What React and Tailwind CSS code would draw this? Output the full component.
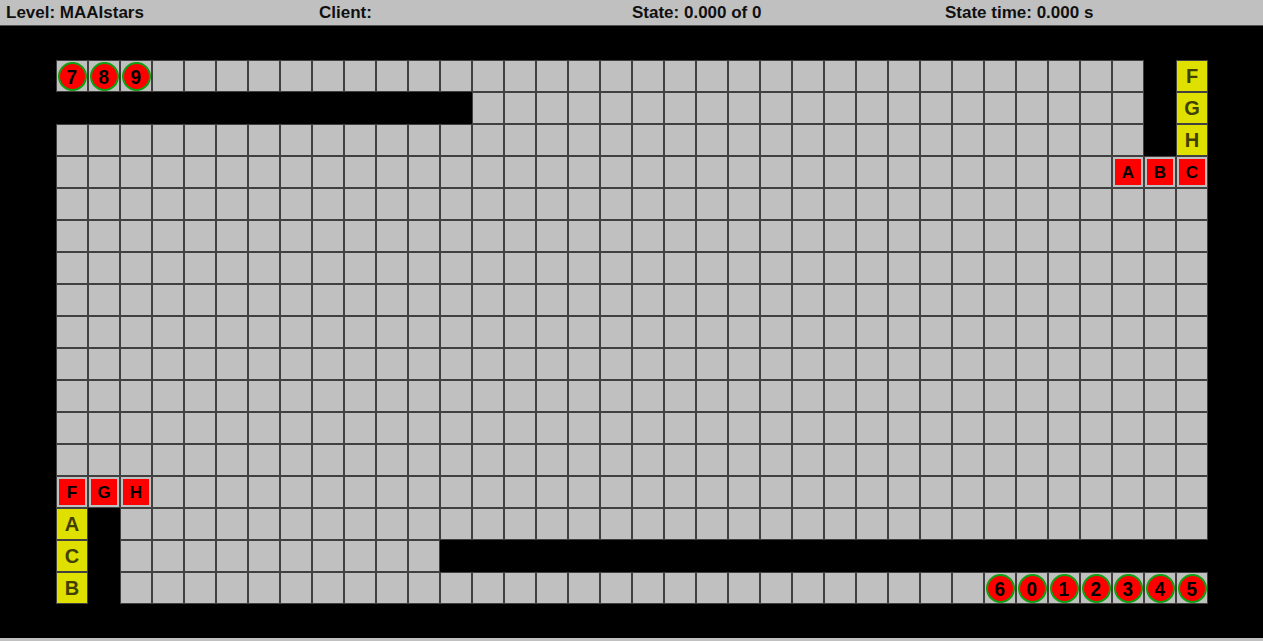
import React from "react";

const ROWS = 17;
const COLS = 36;

const yellow = {
  "0,35": "F",
  "1,35": "G",
  "2,35": "H",
  "14,0": "A",
  "15,0": "C",
  "16,0": "B",
};

const boxes = {
  "3,33": "A",
  "3,34": "B",
  "3,35": "C",
  "13,0": "F",
  "13,1": "G",
  "13,2": "H",
};

const agents = {
  "0,0": "7",
  "0,1": "8",
  "0,2": "9",
  "16,29": "6",
  "16,30": "0",
  "16,31": "1",
  "16,32": "2",
  "16,33": "3",
  "16,34": "4",
  "16,35": "5",
};

const isWall = (r, c) =>
  (r === 1 && c <= 12) ||
  (c === 34 && r <= 2) ||
  (c === 1 && r >= 14) ||
  (r === 15 && c >= 12);

const Cell = ({ r, c }) => {
  const key = `${r},${c}`;
  if (isWall(r, c)) {
    return <div className="w-[32px] h-[32px] bg-black" />;
  }
  if (yellow[key]) {
    return (
      <div className="w-[32px] h-[32px] bg-[#e0e000] border border-[#404040] flex items-center justify-center text-[20px] font-bold text-[#404000] leading-none">
        {yellow[key]}
      </div>
    );
  }
  return (
    <div className="w-[32px] h-[32px] bg-[#c0c0c0] border border-[#404040] flex items-center justify-center">
      {boxes[key] && (
        <div className="w-[26px] h-[26px] bg-[#ff0000] flex items-center justify-center text-[17px] font-bold text-black leading-none">
          {boxes[key]}
        </div>
      )}
      {agents[key] && (
        <div className="w-[29px] h-[29px] rounded-full bg-[#ff0000] border-2 border-[#10a010] flex items-center justify-center text-[21px] font-bold text-black leading-none">
          <span className="inline-block scale-x-90">{agents[key]}</span>
        </div>
      )}
    </div>
  );
};

const App = () => {
  const cells = [];
  for (let r = 0; r < ROWS; r++) {
    for (let c = 0; c < COLS; c++) {
      cells.push(<Cell key={`${r}-${c}`} r={r} c={c} />);
    }
  }

  return (
    <div
      className="w-[1263px] h-[641px] bg-[#c0c0c0] flex flex-col overflow-hidden"
      style={{ fontFamily: '"Liberation Sans", Arial, sans-serif' }}
    >
      {/* Status bar */}
      <div className="h-[26px] shrink-0 flex items-center border-b border-[#505050] text-[17px] font-bold text-[#101010]">
        <span className="w-[319px] pl-[6px]">Level: MAAIstars</span>
        <span className="w-[313px]">Client:</span>
        <span className="w-[313px]">State: 0.000 of 0</span>
        <span>State time: 0.000 s</span>
      </div>

      {/* Level canvas */}
      <div className="h-[612px] shrink-0 bg-black pt-[34px] pl-[56px]">
        <div className="grid grid-cols-[repeat(36,32px)] grid-rows-[repeat(17,32px)] w-[1152px]">
          {cells}
        </div>
      </div>
    </div>
  );
};

export default App;
